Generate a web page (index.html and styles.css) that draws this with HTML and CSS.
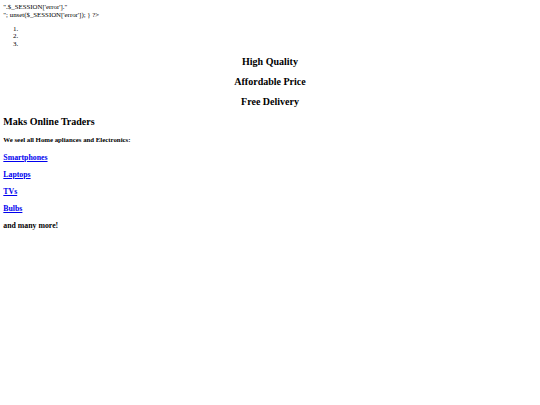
FILE: index.html
```html
<!DOCTYPE html>
<html>
<head>
<meta charset="utf-8">
<link rel="stylesheet" href="styles.css">
</head>
<body>
<div class="raw">".$_SESSION['error']."<br>"; unset($_SESSION['error']); } ?&gt;</div>
<ol class="slides">
<li></li>
<li></li>
<li></li>
</ol>
<h2 class="feature">High Quality</h2>
<h2 class="feature">Affordable Price</h2>
<h2 class="feature">Free Delivery</h2>
<h2 class="title">Maks Online Traders</h2>
<h4 class="intro">We seel all Home apliances and Electronics:</h4>
<h3 class="cat"><a href="#">Smartphones</a></h3>
<h3 class="cat"><a href="#">Laptops</a></h3>
<h3 class="cat"><a href="#">TVs</a></h3>
<h3 class="cat"><a href="#">Bulbs</a></h3>
<h3 class="cat">and many more!</h3>
</body>
</html>
```
FILE: styles.css
```css
html {
  background: #fff;
}
body {
  margin: 3.333px;
  font-family: "Liberation Serif", "Times New Roman", serif;
  font-size: 6.667px;
  line-height: 1.15;
  color: #000;
}
.raw {
  margin: 0;
  font-size: 6.85px;
  line-height: 7.8px;
}
.slides {
  margin: 6.667px 0 7.4px 0;
  padding-left: 16.667px;
  font-size: 7px;
  line-height: 7.8px;
}
.feature {
  text-align: center;
  font-size: 10px;
  line-height: 11.5px;
  margin: 7.4px 0 8.3px 0;
}
.title {
  font-size: 10px;
  line-height: 11.5px;
  margin: 8.3px 0;
}
.intro {
  font-size: 6.8px;
  line-height: 7.67px;
  margin: 8.87px 0;
}
.cat {
  font-size: 7.8px;
  line-height: 9.4px;
  margin: 7.8px 0;
}
.cat a {
  color: #0000ee;
}
```
